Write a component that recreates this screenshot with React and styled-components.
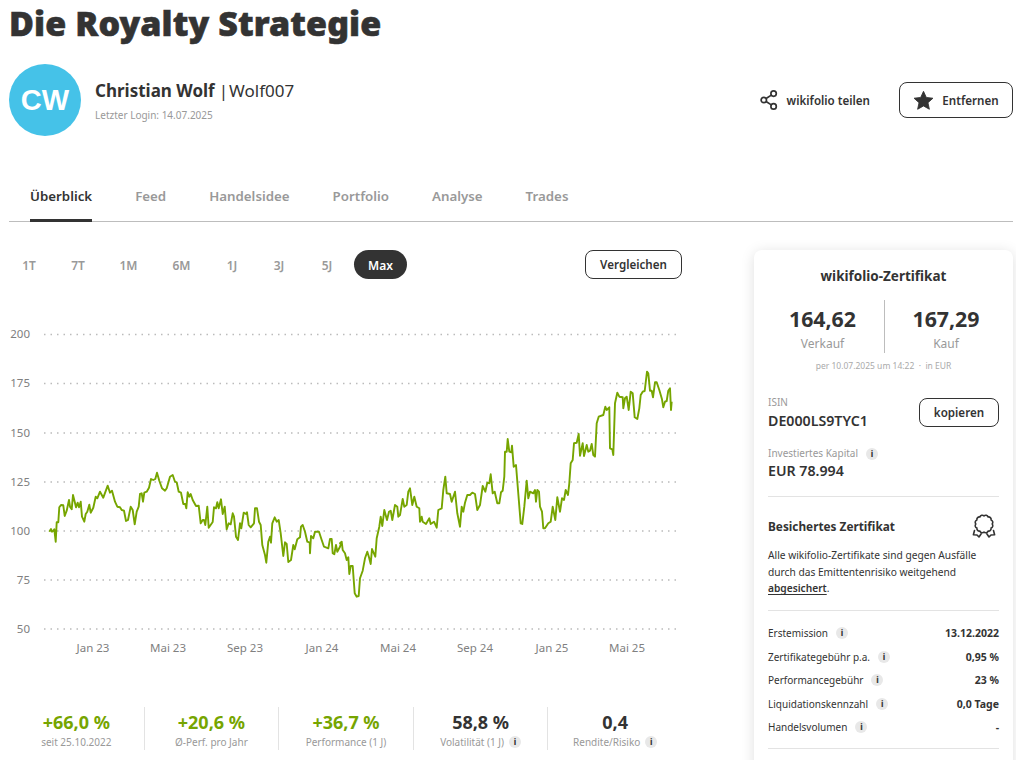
import React from "react";
import styled, { createGlobalStyle } from "styled-components";

const Global = createGlobalStyle`
  html, body { margin: 0; padding: 0; height: 760px; overflow: hidden; background: #fff; }
  body { font-family: "Noto Sans", "Open Sans", sans-serif; color: #333; }
  * { box-sizing: border-box; }
`;

const Page = styled.div`padding: 0 3px 0 9px; width: 1016px;`;
const Title = styled.h1`margin: 0; font-size: 34px; line-height: 46px; font-weight: 900; color: #333; white-space: nowrap; -webkit-text-stroke: 0.6px #333; letter-spacing: 0.1px;`;
const Header = styled.div`display: flex; align-items: center; justify-content: space-between; margin-top: 18px; height: 72px;`;
const Person = styled.div`display: flex; align-items: center; gap: 14px;`;
const Avatar = styled.div`width: 72px; height: 72px; border-radius: 50%; background: #45c2e8; color: #fff; display: flex; align-items: center; justify-content: center; font: 700 29px "Liberation Sans", sans-serif;`;
const PersonText = styled.div`display: flex; flex-direction: column; gap: 5px; margin-top: 1px;`;
const Name = styled.div`font-size: 17px; line-height: 24px; font-weight: 400; b { font-weight: 700; } i { font-style: normal; margin: 0 1px 0 4px; }`;
const Login = styled.div`font-size: 10px; line-height: 14px; color: #999;`;
const Actions = styled.div`display: flex; align-items: center; gap: 29px;`;
const ShareLink = styled.div`display: flex; align-items: center; gap: 9px; font-size: 11.6px; font-weight: 600;`;
const Outline = styled.button`
  font-family: inherit; color: #333; background: #fff; border: 1px solid #333; border-radius: 8px;
  font-size: ${p => p.$size || 11.6}px; font-weight: 600; display: inline-flex; align-items: center; justify-content: center; padding: 0; gap: 8px;
  width: ${p => p.$w}px; height: ${p => p.$h}px; margin-top: ${p => p.$top || 0}px;
`;
const Tabs = styled.nav`display: flex; gap: 43px; margin-top: 39px; padding-left: 21px; height: 47px; border-bottom: 1px solid #bdbdbd;`;
const Tab = styled.div`
  font-size: 13.3px; line-height: 20px; font-weight: 600; padding-top: 11px; height: 47px;
  color: ${p => p.$active ? "#333" : "#999"};
  border-bottom: ${p => p.$active ? "3px solid #333" : "none"};
`;
const Body = styled.div`display: grid; grid-template-columns: 673px 259px; column-gap: 72px; padding-top: 28px;`;
const Left = styled.div`display: flex; flex-direction: column;`;
const RangeRow = styled.div`display: flex; align-items: center; height: 29px;`;
const Ranges = styled.div`display: flex; align-items: center; flex: 1; padding-left: 10px;`;
const Range = styled.div`
  font-size: 12px; font-weight: 600; height: 29px; line-height: 31px; text-align: center; border-radius: 15px;
  width: ${p => p.$w}px; margin-right: ${p => p.$gap}px;
  color: ${p => p.$active ? "#fff" : "#999"}; background: ${p => p.$active ? "#333" : "transparent"};
`;
const Chart = styled.svg`display: block; width: 673px; height: 340px; margin-top: 41px; text { font-family: "Noto Sans", sans-serif; font-size: 11.5px; fill: #808080; }`;
const Stats = styled.div`display: grid; grid-template-columns: repeat(5, 1fr); margin-top: 47px; height: 43px;`;
const Stat = styled.div`display: flex; flex-direction: column; align-items: center; justify-content: center; padding-top: 2px; border-left: ${p => p.$first ? "none" : "1px solid #e3e3e3"};`;
const StatValue = styled.div`font-size: 18px; line-height: 24px; font-weight: 700; color: ${p => p.$green ? "#76a500" : "#333"};`;
const StatLabel = styled.div`font-size: 10px; line-height: 16px; color: #999; display: flex; align-items: center; gap: 5px; white-space: nowrap;`;
const Card = styled.aside`background: #fff; border-radius: 8px; height: 560px; padding: 16px 14px; box-shadow: 0 2px 14px rgba(0,0,0,.13);`;
const CardTitle = styled.div`font-size: 13.5px; line-height: 20px; font-weight: 700; text-align: center;`;
const Prices = styled.div`display: grid; grid-template-columns: 1fr 1fr; margin: 14px -8px 0 -7px; height: 51px;`;
const Price = styled.div`display: flex; flex-direction: column; align-items: center; padding-top: 5px; border-left: ${p => p.$split ? "1px solid #bdbdbd" : "none"};`;
const PriceValue = styled.div`font-size: 21.3px; line-height: 28px; font-weight: 700;`;
const PriceLabel = styled.div`font-size: 12px; line-height: 18px; color: #999; margin-top: 2px;`;
const Stamp = styled.div`font-size: 8.5px; line-height: 14px; color: #aaa; text-align: center; margin-top: 8px;`;
const IsinRow = styled.div`display: flex; align-items: flex-start; justify-content: space-between; margin-top: 22px;`;
const FieldLabel = styled.div`font-size: 10px; line-height: 15px; color: #999; display: flex; align-items: center; gap: 8px;`;
const FieldValue = styled.div`font-size: 14.2px; line-height: 20px; font-weight: 600; margin-top: ${p => p.$top ?? 1}px;`;
const Field = styled.div`margin-top: ${p => p.$top || 0}px;`;
const Rule = styled.div`height: 1px; background: #e3e3e3; margin-top: ${p => p.$top}px;`;
const SecHead = styled.div`display: flex; align-items: center; justify-content: space-between; margin-top: 15px; height: 28px;`;
const SecTitle = styled.div`font-size: 11.8px; font-weight: 700;`;
const SecText = styled.p`font-size: 10.2px; line-height: 16.5px; margin: 7px 0 0; u { font-weight: 600; text-underline-offset: 2px; }`;
const Rows = styled.div`margin-top: 11px;`;
const Row = styled.div`display: flex; align-items: center; justify-content: space-between; height: 23.5px; font-size: 10px;`;
const RowName = styled.div`display: flex; align-items: center; gap: 8px;`;
const RowValue = styled.div`font-weight: 700; font-size: 10.5px;`;
const InfoBadge = styled.span`
  width: 12px; height: 12px; border-radius: 50%; background: #e8e8e8; color: #333; font: 800 8px/12px "Noto Sans", sans-serif;
  text-align: center; display: inline-block; flex: none;
`;
const Info = () => <InfoBadge>i</InfoBadge>;

const ShareIcon = () => (
  <svg width="18" height="20" viewBox="0 0 18 20" fill="none" stroke="#333" strokeWidth="1.7">
    <circle cx="3.8" cy="10" r="2.7" /><circle cx="13.6" cy="3.6" r="2.7" /><circle cx="13.6" cy="16.4" r="2.7" />
    <path d="M6.1 8.5l5.2-3.4M6.1 11.5l5.2 3.4" />
  </svg>
);
const Star = () => (
  <svg width="21" height="21" viewBox="0 0 24 24"><path d="M12 1.5l3.2 7 7.6.9-5.7 5.1 1.6 7.5L12 18.2 5.3 22l1.6-7.5L1.2 9.4l7.6-.9z" fill="#333" stroke="#333" strokeWidth="1" strokeLinejoin="round"/></svg>
);
const scallop = (() => {
  const cx = 13, cy = 11, r = 8.2, n = 12;
  const pt = i => { const a = (i / n) * 2 * Math.PI - Math.PI / 2; return `${(cx + r * Math.cos(a)).toFixed(2)} ${(cy + r * Math.sin(a)).toFixed(2)}`; };
  let d = `M${pt(0)}`;
  for (let i = 1; i <= n; i++) d += `A2.6 2.6 0 0 1 ${pt(i)}`;
  return d + "Z";
})();
const Award = () => (
  <svg width="28" height="26" viewBox="0 0 28 26" fill="none" stroke="#333" strokeWidth="1.6" strokeLinejoin="round" strokeLinecap="round">
    <path d={scallop} />
    <path d="M3.5 17.5L2.4 21.8 6 22l2 2 2.2-3.2M22.5 17.5l1.1 4.3L20 22l-2 2-2.2-3.2" />
  </svg>
);

const seg1 = "148,635 153,627 156,635 160,632 163,628 167,665 170,607 175,607 178,562 183,555 190,556 194,588 200,572 207,540 210,560 215,568 219,525 224,545 228,562 233,548 237,562 242,545 246,590 253,605 257,582 262,575 268,554 272,578 280,563 287,530 292,535 300,515 310,533 323,497 330,518 336,512 345,545 352,560 360,562 365,570 372,572 378,603 384,600 392,560 398,570 404,613 410,575 416,560 420,522 425,520 429,545 433,518 440,515 447,503 453,477 460,480 466,477 471,458 478,482 486,505 495,512 500,505 510,470 518,465 525,485 530,487 536,515 543,518 550,552 556,552 559,565 563,517 568,530 572,522 578,540 588,558 596,557 602,610 608,600 612,600 616,615 622,560 626,623 638,606 642,562 648,565 652,547 656,565 663,538 668,582 674,560 680,628 686,610 692,613 698,580 702,590 708,650 714,660 720,610 724,625 731,578 738,582 741,577 746,615 752,622 762,610 765,565 771,565 777,605 782,615 787,675 795,705 799,728 805,665 810,650 813,668 817,610 824,592 830,605 836,600 842,640 850,708 855,667 860,672 865,726 873,720 880,675 884,688 892,658 900,652 903,620 908,615 915,635 922,665 929,668 930,700 933,648 940,655 945,635 957,635 965,660 972,680 985,685 990,657 995,657 998,700 1003,703 1008,675 1012,695 1020,680 1023,670";
const seg2 = "0,670 5,665 8,690 15,700 20,720 25,712 28,762 32,738 38,738 44,820 50,830 56,828 60,775 68,752 75,715 82,695 87,712 92,732 96,687 106,710 110,655 118,620 122,590 127,618 133,570 141,600 147,575 152,572 157,600 165,555 172,560 175,590 180,585 188,537 193,560 200,555 205,515 210,505 217,555 223,530 230,560 238,565 240,605 245,590 248,605 258,612 268,595 272,612 282,605 290,623 295,570 305,565 310,510 316,470 320,520 330,522 335,545 345,515 352,580 360,620 365,560 370,575 375,548 382,525 390,525 397,518 405,522 412,570 420,555 428,498 436,515 442,488 448,490 452,463 458,520 464,515 472,550 478,550 483,517 488,512 493,470 495,395 500,395 503,357 508,395 514,397 516,377 521,440 528,435 534,510 542,610 547,612 553,560 560,482 565,535 570,515 580,520 585,510 588,545 592,510 597,515 600,560 606,575 610,625 615,625 625,610 632,605 638,560 646,600 652,532 660,575 666,535 672,540 677,510 684,525 688,490 692,430 698,420 702,370 710,368 716,342 720,407 728,370 732,408 740,375 745,395 750,392 755,372 760,405 765,410 770,310 776,290 790,285 796,260 800,270 808,262 810,385 817,388 820,405 825,250 832,218 838,230 848,232 850,265 855,235 860,230 866,270 872,215 878,220 884,292 892,297 898,265 902,225 908,215 914,213 921,155 925,160 930,212 935,212 939,232 945,187 950,187 958,210 966,238 970,262 975,245 980,243 985,212 990,205 993,270 995,245";
const toPts = (s, ox) => s.split(" ").map(p => { const [x, y] = p.split(",").map(Number); return `${(ox + x / 3).toFixed(1)},${(320 + y / 3).toFixed(1)}`; });
const linePts = [...toPts(seg1, 0), ...toPts(seg2, 340)].join(" ");

const grid = [[200, 334.5], [175, 383.5], [150, 433], [125, 482], [100, 531], [75, 580], [50, 629]];
const months = [["Jan 23", 93], ["Mai 23", 168], ["Sep 23", 245], ["Jan 24", 322], ["Mai 24", 398], ["Sep 24", 475], ["Jan 25", 552], ["Mai 25", 627]];
const ranges = [["1T", 29], ["7T", 30.5], ["1M", 33], ["6M", 30.5], ["1J", 27], ["3J", 28], ["5J", 17]];
const tabs = ["Überblick", "Feed", "Handelsidee", "Portfolio", "Analyse", "Trades"];
const stats = [
  ["+66,0 %", "seit 25.10.2022", true, false],
  ["+20,6 %", "Ø-Perf. pro Jahr", true, false],
  ["+36,7 %", "Performance (1 J)", true, false],
  ["58,8 %", "Volatilität (1 J)", false, true],
  ["0,4", "Rendite/Risiko", false, true],
];
const rows = [
  ["Erstemission", "13.12.2022"],
  ["Zertifikategebühr p.a.", "0,95 %"],
  ["Performancegebühr", "23 %"],
  ["Liquidationskennzahl", "0,0 Tage"],
  ["Handelsvolumen", "-"],
];

export default function App() {
  return (
    <Page>
      <Global />
      <Title>Die Royalty Strategie</Title>
      <Header>
        <Person>
          <Avatar>CW</Avatar>
          <PersonText>
            <Name><b>Christian Wolf</b><i>|</i>Wolf007</Name>
            <Login>Letzter Login: 14.07.2025</Login>
          </PersonText>
        </Person>
        <Actions>
          <ShareLink><ShareIcon />wikifolio teilen</ShareLink>
          <Outline $w={114} $h={36}><Star />Entfernen</Outline>
        </Actions>
      </Header>
      <Tabs>{tabs.map((t, i) => <Tab key={t} $active={i === 0}>{t}</Tab>)}</Tabs>
      <Body>
        <Left>
          <RangeRow>
            <Ranges>
              {ranges.map(([l, g]) => <Range key={l} $w={20} $gap={g}>{l}</Range>)}
              <Range $active $w={53} $gap={0}>Max</Range>
            </Ranges>
            <Outline $w={97} $h={29}>Vergleichen</Outline>
          </RangeRow>
          <Chart viewBox="9 320 673 340">
            {grid.map(([v, y]) => (
              <g key={v}>
                <line x1="44" x2="677" y1={y} y2={y} stroke="#bbb" strokeWidth="1.5" strokeDasharray="1.5 5" />
                <text x="30" y={y + 3.5} textAnchor="end">{v}</text>
              </g>
            ))}
            {months.map(([m, x]) => <text key={m} x={x} y="652" textAnchor="middle">{m}</text>)}
            <polyline points={linePts} fill="none" stroke="#76a500" strokeWidth="1.9" strokeLinejoin="round" />
          </Chart>
          <Stats>
            {stats.map(([v, l, g, inf], i) => (
              <Stat key={l} $first={i === 0}>
                <StatValue $green={g}>{v}</StatValue>
                <StatLabel>{l}{inf && <Info />}</StatLabel>
              </Stat>
            ))}
          </Stats>
        </Left>
        <Card>
          <CardTitle>wikifolio-Zertifikat</CardTitle>
          <Prices>
            <Price><PriceValue>164,62</PriceValue><PriceLabel>Verkauf</PriceLabel></Price>
            <Price $split><PriceValue>167,29</PriceValue><PriceLabel>Kauf</PriceLabel></Price>
          </Prices>
          <Stamp>per 10.07.2025 um 14:22 &nbsp;·&nbsp; in EUR</Stamp>
          <IsinRow>
            <div>
              <FieldLabel>ISIN</FieldLabel>
              <FieldValue>DE000LS9TYC1</FieldValue>
            </div>
            <Outline $w={80} $h={29} $top={3}>kopieren</Outline>
          </IsinRow>
          <Field $top={15}>
            <FieldLabel>Investiertes Kapital <Info /></FieldLabel>
            <FieldValue $top={0}>EUR 78.994</FieldValue>
          </Field>
          <Rule $top={15} />
          <SecHead><SecTitle>Besichertes Zertifikat</SecTitle><Award /></SecHead>
          <SecText>Alle wikifolio-Zertifikate sind gegen Ausfälle durch das Emittentenrisiko weitgehend <u>abgesichert</u>.</SecText>
          <Rule $top={13} />
          <Rows>
            {rows.map(([n, v]) => (
              <Row key={n}><RowName>{n}<Info /></RowName><RowValue>{v}</RowValue></Row>
            ))}
          </Rows>
          <Rule $top={9} />
        </Card>
      </Body>
    </Page>
  );
}
